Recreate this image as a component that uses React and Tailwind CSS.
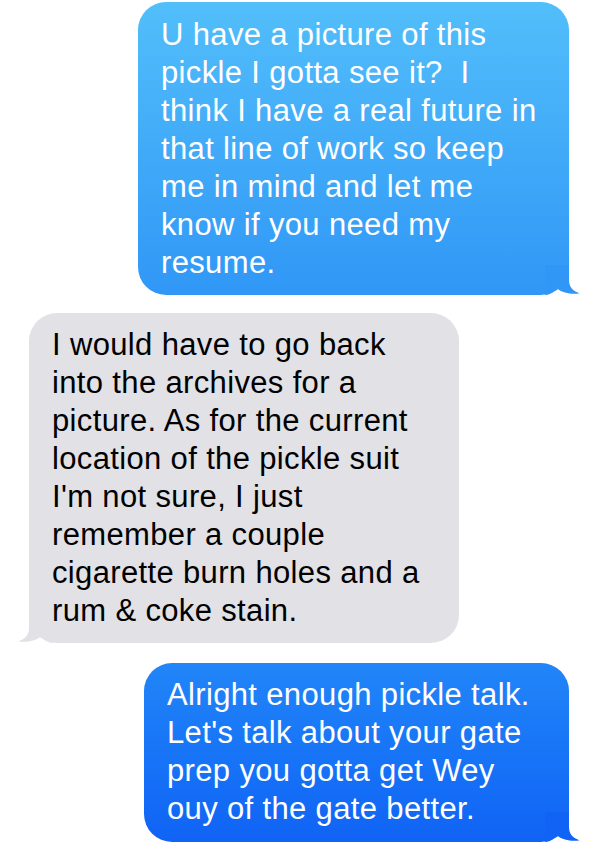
import React from "react";

function Tail({ color, left }) {
  return (
    <svg
      width="37"
      height="30"
      viewBox="0 0 37 30"
      className={left ? "absolute bottom-0 left-[-13px] -scale-x-100" : "absolute bottom-0 right-[-13px]"}
    >
      <path
        d="M0,0 L24,0 L24,15 C24,22 28,26 34.5,28.3 C28,29.6 18,28.5 12,23.5 C9,26.5 5,30 0,30 Z"
        fill={color}
      />
    </svg>
  );
}

function Bubble({ lines, side, className, textClass, tailColor }) {
  return (
    <div className={"relative rounded-[28px] px-[23px] " + className}>
      <div className={"relative z-10 text-[31px] leading-[38px] tracking-[0.35px] whitespace-pre " + textClass}>
        {lines.map((l, i) => (
          <div key={i}>{l}</div>
        ))}
      </div>
      <Tail color={tailColor} left={side === "left"} />
    </div>
  );
}

export default function App() {
  return (
    <div
      className="w-[600px] h-[855px] bg-white flex flex-col overflow-hidden"
      style={{ fontFamily: '"Liberation Sans", Arial, sans-serif' }}
    >
      <Bubble
        side="right"
        className="self-end mr-[31px] mt-[2px] w-[431px] pt-[14px] pb-[13px] bg-gradient-to-b from-[#52befa] to-[#3097f6]"
        textClass="text-white"
        tailColor="#3097f6"
        lines={[
          "U have a picture of this",
          "pickle I gotta see it?  I",
          "think I have a real future in",
          "that line of work so keep",
          "me in mind and let me",
          "know if you need my",
          "resume.",
        ]}
      />
      <Bubble
        side="left"
        className="self-start ml-[29px] mt-[18px] w-[430px] pt-[13px] pb-[13px] bg-[#e1e1e6]"
        textClass="text-black"
        tailColor="#e1e1e6"
        lines={[
          "I would have to go back",
          "into the archives for a",
          "picture. As for the current",
          "location of the pickle suit",
          "I'm not sure, I just",
          "remember a couple",
          "cigarette burn holes and a",
          "rum & coke stain.",
        ]}
      />
      <Bubble
        side="right"
        className="self-end mr-[31px] mt-[20px] w-[425px] pt-[13px] pb-[14px] bg-gradient-to-b from-[#2285f8] to-[#1163f5]"
        textClass="text-white"
        tailColor="#1163f5"
        lines={[
          "Alright enough pickle talk.",
          "Let's talk about your gate",
          "prep you gotta get Wey",
          "ouy of the gate better.",
        ]}
      />
    </div>
  );
}
